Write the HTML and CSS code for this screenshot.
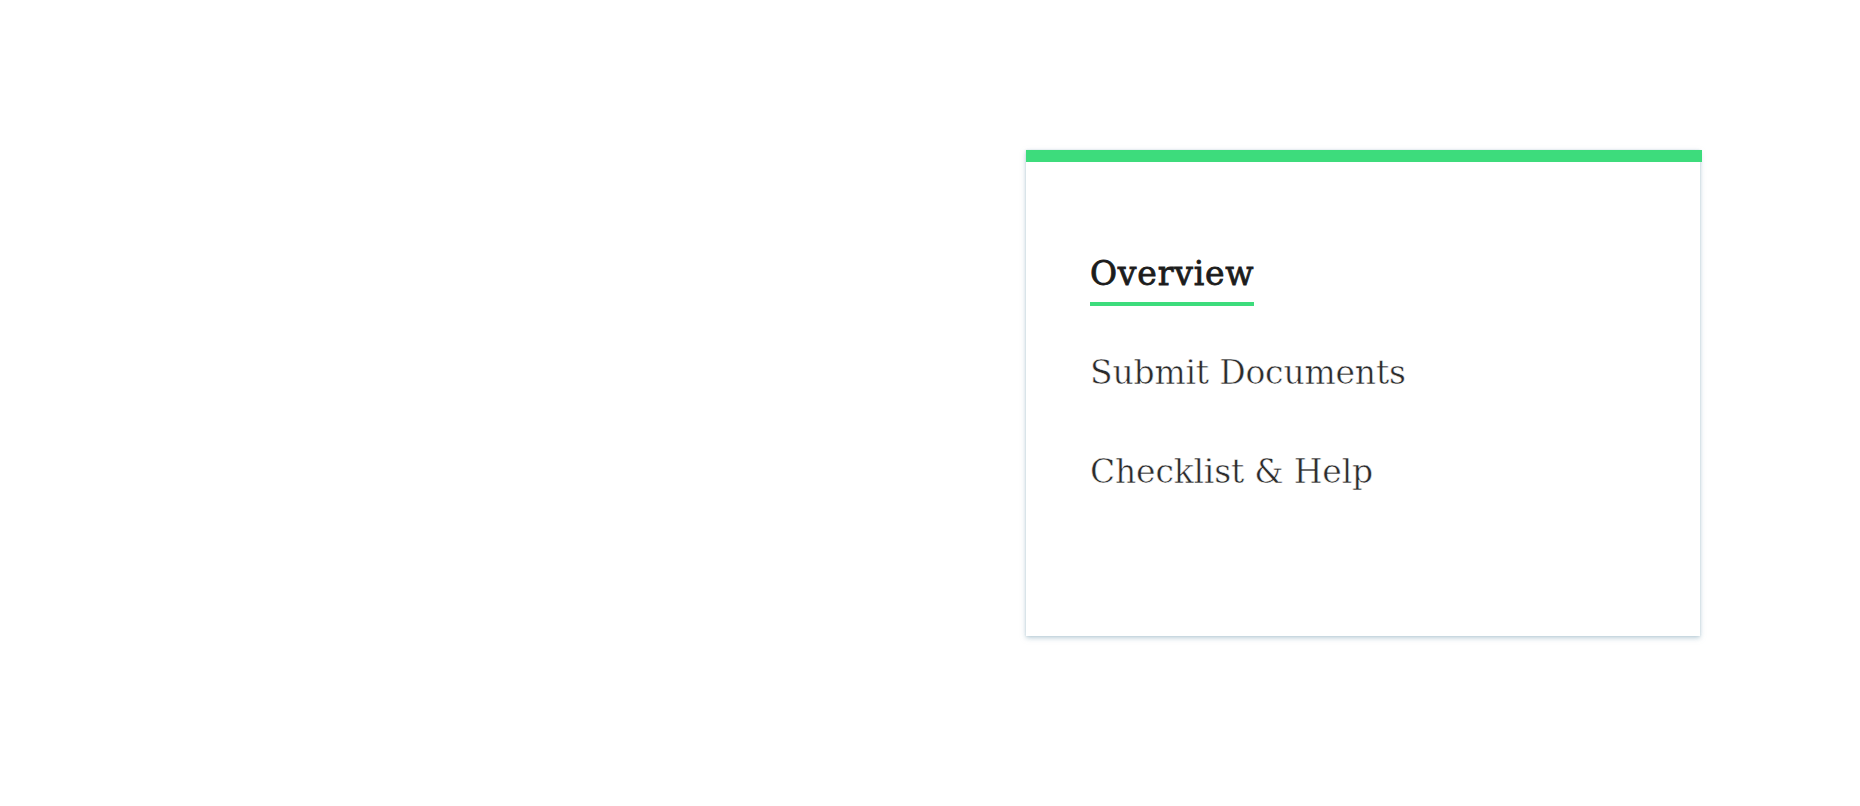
FILE: index.html
```html
<!DOCTYPE html>
<html lang="en">
<head>
<meta charset="utf-8">
<title>Navigation</title>
<link rel="stylesheet" href="styles.css">
</head>
<body>
<div class="page">
  <div class="card">
    <div class="card-bar"></div>
    <nav class="nav">
      <a class="nav-link active" href="#">Overview</a>
      <a class="nav-link" href="#">Submit Documents</a>
      <a class="nav-link" href="#">Checklist &amp; Help</a>
    </nav>
  </div>
</div>
</body>
</html>
```
FILE: styles.css
```css
html, body {
  margin: 0;
  padding: 0;
  background: #ffffff;
}
.page {
  box-sizing: border-box;
  min-height: 806px;
  padding: 150px 0 0 1026px;
  display: flex;
  align-items: flex-start;
}
.card {
  width: 674px;
  background: #ffffff;
  box-shadow: 0 2px 5px rgba(135, 170, 185, 0.55), 0 0 2px rgba(135, 170, 185, 0.3);
  display: flex;
  flex-direction: column;
}
.card-bar {
  height: 12px;
  background: #3ddc7c;
  margin-right: -2px;
}
.nav {
  display: flex;
  flex-direction: column;
  align-items: flex-start;
  gap: 47px;
  padding: 92px 64px 132px 64px;
}
.nav-link {
  font-family: "DejaVu Serif", "Liberation Serif", serif;
  font-size: 33px;
  line-height: 40px;
  color: #2b2b2b;
  text-decoration: none;
  letter-spacing: -0.2px;
  padding-bottom: 8px;
  border-bottom: 4px solid transparent;
  -webkit-text-stroke: 0.5px #ffffff;
  paint-order: fill stroke;
}
.nav-link.active {
  color: #1c1c1c;
  letter-spacing: 0.8px;
  -webkit-text-stroke: 0.8px #1c1c1c;
  border-bottom-color: #3ddc7c;
}
```
